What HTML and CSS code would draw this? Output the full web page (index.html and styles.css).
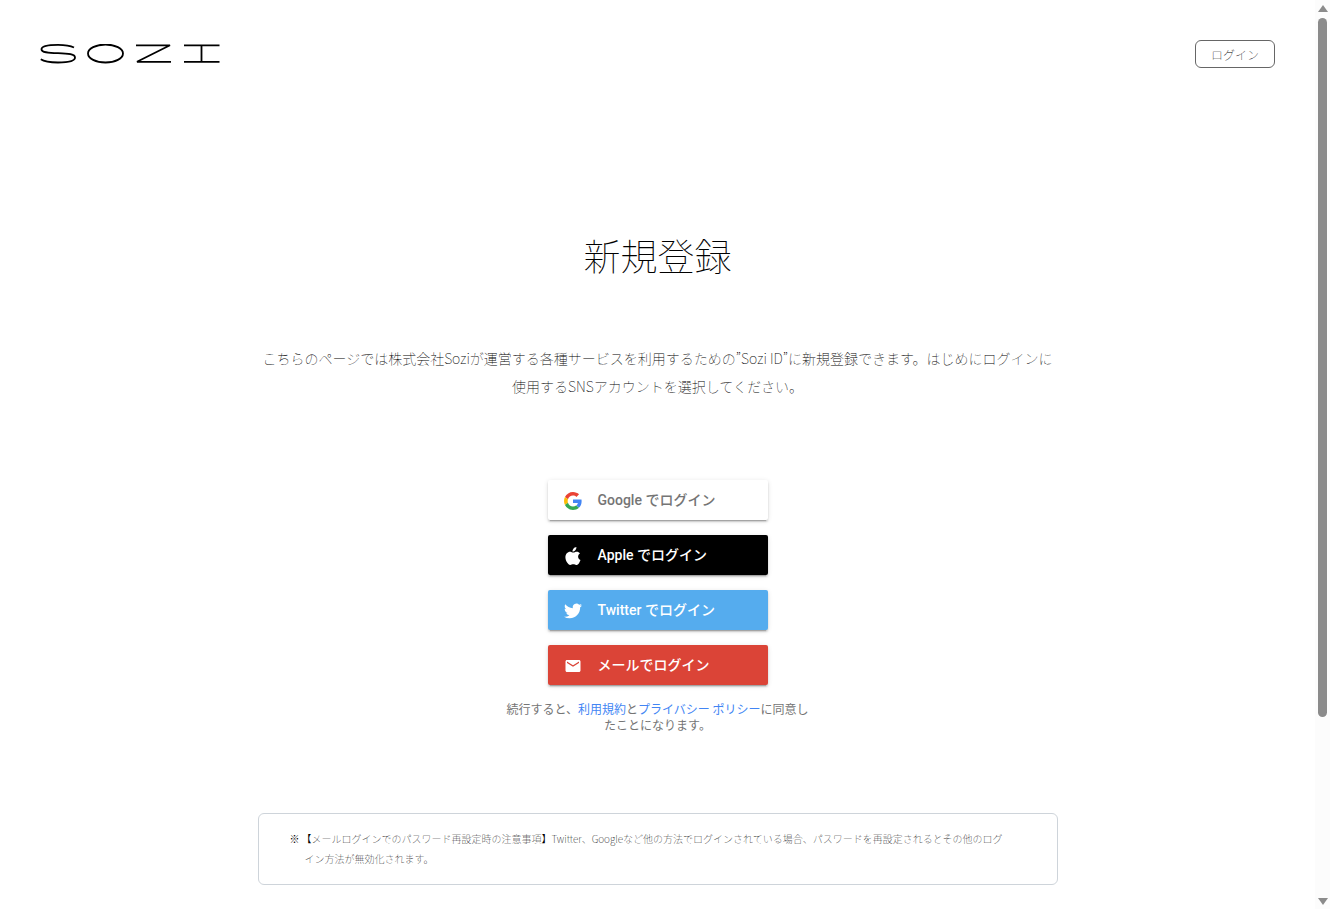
FILE: index.html
```html
<!DOCTYPE html>
<html lang="ja">
<head>
    <meta charset="UTF-8">
    <meta name="viewport" content="width=device-width, initial-scale=1.0">
    <title>新規登録 | Sozi ID</title>
    <link rel="stylesheet" href="styles.css">
</head>
<body>
    <div class="page">
        <header class="header">
            <a class="logo" href="#" aria-label="SOZI">
                <svg width="180" height="20" viewBox="0 0 180 20" fill="none" stroke="#000" stroke-width="1.8">
                    <path d="M34 3.500C30 1.500 24 .9 18 .9C8 .9 1.500 2 1.500 5.200C1.500 8.500 8 8.900 18 9.200C29 9.500 35 10 35 13.500C35 17 28 18.500 18 18.500C10 18.500 4 17.500 .8 15.300"/>
                    <ellipse cx="65.500" cy="9.500" rx="17.500" ry="9"/>
                    <path d="M96 1.300H130L97 17.800H131"/>
                    <path d="M144 1.300H179.500M144 17.800H179.500M161.500 1.300V17.800"/>
                </svg>
            </a>
            <button class="login-button" type="button">ログイン</button>
        </header>

        <main class="main">
            <h1>新規登録</h1>
            <p class="lead">こちらのページでは株式会社Soziが運営する各種サービスを利用するための”Sozi ID”に新規登録できます。はじめにログインに使用するSNSアカウントを選択してください。</p>

            <div class="providers">
                <button class="provider google" type="button">
                    <svg width="18" height="18" viewBox="0 0 48 48">
                        <path fill="#EA4335" d="M24 9.500c3.540 0 6.710 1.220 9.210 3.600l6.850-6.850C35.900 2.380 30.470 0 24 0 14.620 0 6.510 5.380 2.560 13.220l7.980 6.190C12.430 13.720 17.740 9.500 24 9.500z"/>
                        <path fill="#4285F4" d="M46.980 24.550c0-1.570-.15-3.090-.38-4.550H24v9.020h12.940c-.58 2.960-2.260 5.480-4.780 7.180l7.730 6c4.510-4.180 7.090-10.360 7.090-17.650z"/>
                        <path fill="#FBBC05" d="M10.530 28.590c-.48-1.450-.76-2.990-.76-4.590s.27-3.140.76-4.590l-7.980-6.190C.92 16.460 0 20.120 0 24c0 3.880.92 7.540 2.560 10.780l7.970-6.190z"/>
                        <path fill="#34A853" d="M24 48c6.480 0 11.930-2.130 15.890-5.810l-7.730-6c-2.150 1.450-4.920 2.300-8.160 2.300-6.260 0-11.570-4.220-13.470-9.910l-7.980 6.190C6.510 42.620 14.620 48 24 48z"/>
                    </svg>
                    <span>Google でログイン</span>
                </button>
                <button class="provider apple" type="button">
                    <svg width="18" height="18" viewBox="0 0 24 24" fill="#fff">
                        <path d="M16.500 0c.2 1.700-.5 3.200-1.400 4.300-1 1.100-2.400 1.900-3.800 1.800-.2-1.600.6-3.200 1.500-4.200C13.800.8 15.300.1 16.500 0zM21.300 8.500c-1.500.9-2.500 2.300-2.500 4.200 0 2.200 1.300 4 3.200 4.700-.5 1.500-1.200 2.900-2 4.100-1.100 1.500-2.200 2.500-3.600 2.500-1.600 0-2.200-.9-4-.9-1.900 0-2.500.9-4.100.9-1.600 0-2.800-1.300-3.900-2.900C1.300 16.500 1.100 11.300 3.700 8.400c1.200-1.400 2.800-2.100 4.300-2.100 1.800 0 3 1 4.400 1 1.300 0 2.600-1 4.600-1 1.700 0 3.300.8 4.300 2.200z"/>
                    </svg>
                    <span>Apple でログイン</span>
                </button>
                <button class="provider twitter" type="button">
                    <svg width="18" height="18" viewBox="0 0 24 24" fill="#fff">
                        <path d="M23.950 4.570a10 10 0 0 1-2.820.77 4.960 4.960 0 0 0 2.160-2.720c-.95.550-2 .95-3.130 1.180a4.920 4.920 0 0 0-8.380 4.480C7.690 8.090 4.070 6.130 1.640 3.160a4.820 4.820 0 0 0-.67 2.480c0 1.710.87 3.210 2.190 4.100a4.900 4.900 0 0 1-2.230-.62v.06a4.920 4.920 0 0 0 3.950 4.830 5 5 0 0 1-2.210.08 4.940 4.940 0 0 0 4.600 3.420A9.870 9.870 0 0 1 0 19.540a13.990 13.990 0 0 0 7.550 2.210c9.050 0 14-7.500 14-13.980 0-.21 0-.42-.02-.63a9.940 9.940 0 0 0 2.460-2.550z"/>
                    </svg>
                    <span>Twitter でログイン</span>
                </button>
                <button class="provider mail" type="button">
                    <svg width="18" height="18" viewBox="0 0 24 24" fill="#fff">
                        <path d="M20 4H4c-1.100 0-2 .9-2 2v12c0 1.100.9 2 2 2h16c1.100 0 2-.9 2-2V6c0-1.100-.9-2-2-2zm0 4l-8 5-8-5V6l8 5 8-5v2z"/>
                    </svg>
                    <span>メールでログイン</span>
                </button>
            </div>

            <p class="terms">続行すると、<a href="#">利用規約</a>と<a href="#">プライバシー ポリシー</a>に同意したことになります。</p>

            <ul class="notes">
                <li>【メールログインでのパスワード再設定時の注意事項】Twitter、Googleなど他の方法でログインされている場合、パスワードを再設定されるとその他のログイン方法が無効化されます。</li>
            </ul>
        </main>
    </div>

    <div class="scrollbar" aria-hidden="true">
        <span class="arrow up"></span>
        <span class="track"><span class="thumb"></span></span>
        <span class="arrow down"></span>
    </div>
</body>
</html>
```
FILE: styles.css
```css
* {
    box-sizing: border-box;
}
body {
    margin: 0;
    height: 100vh;
    display: flex;
    overflow: hidden;
    background: #fff;
    color: #000;
    font-family: "Noto Sans CJK JP", sans-serif;
    font-weight: 100;
}
h1, p, ul {
    margin: 0;
    padding: 0;
}
.page {
    flex: 1;
    overflow: hidden;
}
.header {
    display: flex;
    justify-content: space-between;
    align-items: center;
    padding: 40px 40px 0;
}
.logo svg {
    display: block;
}
.login-button {
    width: 80px;
    height: 28px;
    padding: 0;
    border: 1px solid #666;
    border-radius: 6px;
    background: #fff;
    color: #000;
    font: inherit;
    font-size: 12px;
    cursor: pointer;
}
.main {
    max-width: 800px;
    margin: 160px auto 0;
}
h1 {
    font-size: 37px;
    font-weight: 100;
    line-height: 54px;
    text-align: center;
}
.lead {
    margin-top: 62px;
    font-size: 14px;
    line-height: 28px;
    text-align: center;
}
.providers {
    width: 220px;
    margin: 80px auto 0;
    display: flex;
    flex-direction: column;
    gap: 15px;
}
.provider {
    display: flex;
    align-items: center;
    gap: 16px;
    height: 40px;
    padding: 0 16px;
    border: none;
    border-radius: 2px;
    box-shadow: 0 2px 2px 0 rgba(0, 0, 0, 0.14), 0 3px 1px -2px rgba(0, 0, 0, 0.2), 0 1px 5px 0 rgba(0, 0, 0, 0.12);
    color: #fff;
    font-family: Roboto, "Noto Sans CJK JP", sans-serif;
    font-size: 14px;
    font-weight: 500;
    cursor: pointer;
}
.provider svg {
    margin-top: 2px;
}
.provider span {
    padding-bottom: 2px;
}
.google {
    background: #fff;
    color: #757575;
}
.apple {
    background: #000;
}
.twitter {
    background: #55acee;
}
.mail {
    background: #db4437;
}
.terms {
    max-width: 312px;
    margin: 16px auto 0;
    font-size: 12px;
    font-weight: 400;
    line-height: 16px;
    text-align: center;
    color: #757575;
}
.terms a {
    color: #4285f4;
    text-decoration: none;
}
.notes {
    margin-top: 80px;
    padding: 15px 50px 15px 46px;
    border: 1px solid #ced4da;
    border-radius: 6px;
    font-size: 10px;
    line-height: 20px;
    list-style: none;
}
.notes li {
    text-indent: -3px;
}
.notes li::before {
    content: "※";
    float: left;
    margin-left: -15px;
    text-indent: 0;
    font-weight: 400;
}
.scrollbar {
    width: 15px;
    display: flex;
    flex-direction: column;
    align-items: center;
    padding: 5px 0 4px;
    background: #fcfcfc;
}
.arrow {
    border: 5px solid transparent;
}
.up {
    border-top: none;
    border-bottom: 7px solid #8b8b8b;
}
.down {
    border-bottom: none;
    border-top: 7px solid #8b8b8b;
}
.track {
    flex: 1;
    margin: 6px 0;
}
.thumb {
    display: block;
    width: 9px;
    height: 80%;
    border-radius: 5px;
    background: #8b8b8b;
}
```
